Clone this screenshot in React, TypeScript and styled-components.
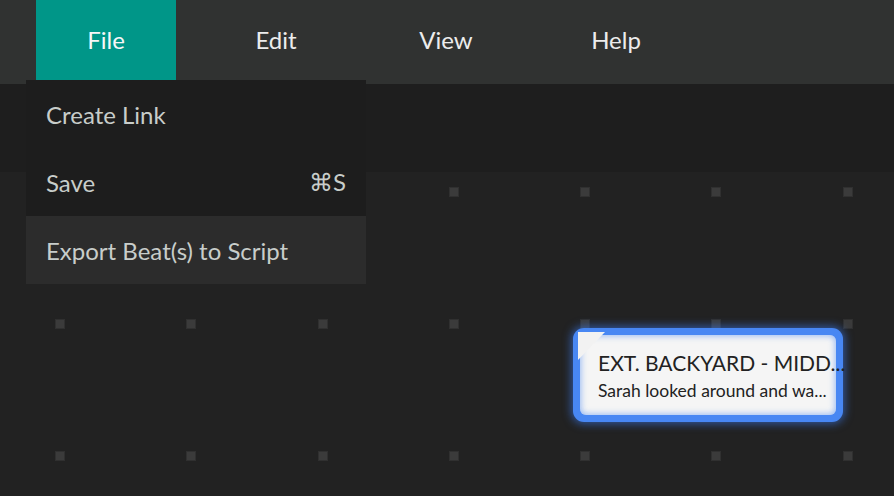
import React from 'react'
import styled, { createGlobalStyle } from 'styled-components'

const GlobalStyle = createGlobalStyle`
  html, body, #root {
    margin: 0;
    padding: 0;
    width: 100%;
    height: 100%;
  }
  body {
    background: #222222;
    font-family: 'Lato', 'Open Sans', sans-serif;
    overflow: hidden;
  }
`

const menus = ['File', 'Edit', 'View', 'Help']

const fileItems = [
  { label: 'Create Link', shortcut: '' },
  { label: 'Save', shortcut: '⌘S' },
  { label: 'Export Beat(s) to Script', shortcut: '', active: true },
]

const App = () => {
  const dots = Array.from({ length: 21 })
  return (
    <Page>
      <GlobalStyle />
      <MenuBar>
        {menus.map((m, i) => (
          <MenuTab key={m} open={i === 0}>
            {m}
          </MenuTab>
        ))}
        <Dropdown>
          {fileItems.map((item) => (
            <DropdownItem key={item.label} active={item.active}>
              <span>{item.label}</span>
              {item.shortcut && <Shortcut>{item.shortcut}</Shortcut>}
            </DropdownItem>
          ))}
        </Dropdown>
      </MenuBar>
      <Toolbar />
      <Canvas>
        {dots.map((_, i) => (
          <Dot key={i} />
        ))}
        <BeatCard style={{ left: 573, top: 156 }}>
          <Fold />
          <BeatBody>
            <BeatTitle>EXT. BACKYARD - MIDD...</BeatTitle>
            <BeatText>Sarah looked around and wa...</BeatText>
          </BeatBody>
        </BeatCard>
      </Canvas>
    </Page>
  )
}

const Page = styled.div`
  display: flex;
  flex-direction: column;
  width: 894px;
  height: 496px;
  background: #222222;
`

const MenuBar = styled.nav`
  position: relative;
  display: flex;
  align-items: flex-start;
  gap: 30px;
  height: 84px;
  padding-left: 36px;
  background: #303231;
  flex-shrink: 0;
  z-index: 2;
`

const MenuTab = styled.div<{ open?: boolean }>`
  display: flex;
  align-items: center;
  justify-content: center;
  width: 140px;
  height: 80px;
  font-size: 24px;
  color: ${(p) => (p.open ? '#f7f7f7' : '#ececec')};
  background: ${(p) => (p.open ? '#009688' : 'transparent')};
  padding-bottom: 2px;
  box-sizing: border-box;
`

const Dropdown = styled.div`
  position: absolute;
  top: 80px;
  left: 26px;
  width: 340px;
  display: flex;
  flex-direction: column;
  background: #1d1d1d;
`

const DropdownItem = styled.div<{ active?: boolean }>`
  display: flex;
  align-items: center;
  justify-content: space-between;
  height: 68px;
  padding: 0 20px;
  font-size: 24px;
  color: #c8cdca;
  background: ${(p) => (p.active ? '#2c2c2c' : 'transparent')};
`

const Shortcut = styled.span``

const Toolbar = styled.div`
  height: 88px;
  background: #1e1e1e;
  flex-shrink: 0;
`

const Canvas = styled.div`
  position: relative;
  flex: 1;
  display: grid;
  grid-template-columns: repeat(7, 10px);
  grid-auto-rows: 10px;
  column-gap: 121.3px;
  row-gap: 122px;
  padding: 15px 0 0 55px;
  align-content: start;
  background: #222222;
`

const Dot = styled.div`
  width: 10px;
  height: 10px;
  box-sizing: border-box;
  background: #3b3b3b;
  border: 1px solid #303030;
`

const BeatCard = styled.div`
  position: absolute;
  width: 270px;
  height: 94px;
  box-sizing: border-box;
  padding: 7px;
  border-radius: 11px;
  background: #4887f3;
  box-shadow: 0 0 9px 2px rgba(60, 130, 255, 0.55);
`

const Fold = styled.div`
  position: absolute;
  left: 5px;
  top: 4px;
  width: 27px;
  height: 28px;
  background: #f2f2f2;
  clip-path: polygon(0 0, 100% 0, 0 100%);
  z-index: 1;
`

const BeatBody = styled.div`
  height: 100%;
  box-sizing: border-box;
  border-radius: 6px;
  background: #f5f5f5;
  box-shadow: inset 0 0 6px 1px rgba(72, 135, 243, 0.55);
  padding: 16px 0 0 18px;
  display: flex;
  flex-direction: column;
  gap: 6px;
  color: #222;
`

const BeatTitle = styled.div`
  font-size: 21px;
  line-height: 24px;
  white-space: nowrap;
`

const BeatText = styled.div`
  font-size: 17.5px;
  line-height: 20px;
  white-space: nowrap;
`

export default App
